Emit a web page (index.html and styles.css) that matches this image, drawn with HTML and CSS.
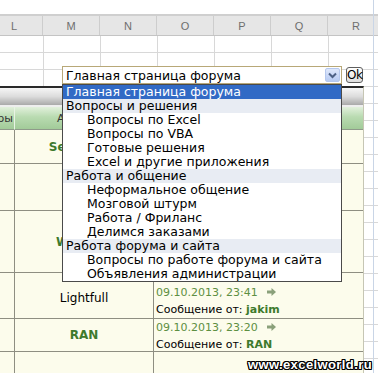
FILE: index.html
```html
<!DOCTYPE html>
<html lang="ru">
<head>
    <meta charset="UTF-8">
    <title>Форум - переход по разделам</title>
    <link rel="stylesheet" href="styles.css">
</head>
<body>
    <div class="screen">
        <div class="topbar"></div>
        <div class="sheet">
            <div class="sheet-head">
                <div>L</div><div>M</div><div>N</div><div>O</div><div>P</div><div>Q</div><div>R</div>
            </div>
            <div class="sheet-body"></div>
        </div>

        <div class="forum">
            <div class="forum-bar"></div>
            <div class="forum-table">
                <div class="cell head first"><span>ры</span></div>
                <div class="cell head author">Автор</div>
                <div class="cell head"></div>

                <div class="cell row1 first"></div>
                <div class="cell row1 author"><b class="nick">Serge_007</b></div>
                <div class="cell row1"></div>

                <div class="cell row2 first"></div>
                <div class="cell row2 author"></div>
                <div class="cell row2"></div>

                <div class="cell row3 first"></div>
                <div class="cell row3 author"><b class="nick">Wasilich</b></div>
                <div class="cell row3"></div>

                <div class="cell row4 first"></div>
                <div class="cell row4 author"><span class="plain">Lightfull</span></div>
                <div class="cell row4 last">
                    <div class="date">09.10.2013, 23:41 <svg class="go" width="9" height="8" viewBox="0 0 9 8"><path d="M0 2.5h4.5V0L9 4 4.5 8V5.5H0z" fill="#8aa07a"/></svg></div>
                    <div class="msg">Сообщение от: <b class="nick">jakim</b></div>
                </div>

                <div class="cell row5 first"></div>
                <div class="cell row5 author"><b class="nick">RAN</b></div>
                <div class="cell row5 last">
                    <div class="date">09.10.2013, 23:20 <svg class="go" width="9" height="8" viewBox="0 0 9 8"><path d="M0 2.5h4.5V0L9 4 4.5 8V5.5H0z" fill="#8aa07a"/></svg></div>
                    <div class="msg">Сообщение от: <b class="nick">RAN</b></div>
                </div>

                <div class="cell row6 first"></div>
                <div class="cell row6 author"></div>
                <div class="cell row6"></div>
            </div>
        </div>

        <div class="jump">
            <div class="select">
                <span class="select-text">Главная страница форума</span>
                <span class="select-btn">
                    <svg width="9" height="7" viewBox="0 0 9 7"><path d="M1 1.5l3.5 3.5L8 1.5" fill="none" stroke="#4d6185" stroke-width="2"/></svg>
                </span>
            </div>
            <div class="ok">Ok</div>
        </div>

        <ul class="menu">
            <li class="group selected">Главная страница форума</li>
            <li class="group">Вопросы и решения</li>
            <li>Вопросы по Excel</li>
            <li>Вопросы по VBA</li>
            <li>Готовые решения</li>
            <li>Excel и другие приложения</li>
            <li class="group">Работа и общение</li>
            <li>Неформальное общение</li>
            <li>Мозговой штурм</li>
            <li>Работа / Фриланс</li>
            <li>Делимся заказами</li>
            <li class="group">Работа форума и сайта</li>
            <li>Вопросы по работе форума и сайта</li>
            <li>Объявления администрации</li>
        </ul>

        <div class="edge"></div>
        <div class="watermark">www.excelworld.ru</div>
    </div>
</body>
</html>
```

FILE: styles.css
```css
* {
    margin: 0;
    padding: 0;
    box-sizing: border-box;
}

body {
    font-family: "DejaVu Sans", Verdana, sans-serif;
    color: #000;
    background: #fff;
}

.screen {
    position: relative;
    width: 378px;
    height: 373px;
    overflow: hidden;
}

/* spreadsheet behind the forum */
.topbar {
    height: 16px;
    border-bottom: 2px solid #cfcfcf;
}

.sheet-head {
    display: grid;
    grid-template-columns: repeat(7, 57px);
    margin-left: -14px;
    height: 20px;
    background: #e6e6e6;
    border-bottom: 1px solid #c4c4c4;
}

.sheet-head div {
    display: flex;
    align-items: center;
    justify-content: center;
    border-right: 1px solid #cdcdcd;
    font-family: "Liberation Sans", Arial, sans-serif;
    font-size: 11px;
    color: #6e6e6e;
}

.sheet-body {
    height: 340px;
    background-color: #fff;
    background-image:
        linear-gradient(to right, #d8d8d8 1px, transparent 1px),
        linear-gradient(to bottom, #d8d8d8 1px, transparent 1px);
    background-size: 57px 100%, 100% 17px;
    background-position: 43px 0, 0 16px;
}

/* forum block embedded on the sheet */
.forum {
    position: absolute;
    left: 0;
    top: 86px;
    width: 364px;
    bottom: 0;
    border-top: 2px solid #2a2a2a;
    background: #fcfcec;
    border-right: 1px solid #c6c6b4;
}

.forum-bar {
    height: 19px;
    background: linear-gradient(#f6f6f6, #dcdcdc 50%, #a9a9a9);
    border-bottom: 2px solid #eeeeee;
}

.forum-table {
    display: grid;
    grid-template-columns: 15px 139px 1fr;
    grid-template-rows: 23px 34px 47px 62px 46px 33px 40px;
}

.cell {
    display: flex;
    align-items: center;
    justify-content: center;
    border-bottom: 1px solid #8e8e82;
    border-right: 1px solid #8e8e82;
    overflow: hidden;
}

.cell.last {
    border-right: none;
    flex-direction: column;
    align-items: flex-start;
    justify-content: center;
    padding-left: 2px;
    padding-top: 1px;
}

.cell.row4 {
    padding-top: 4px;
}

.cell.row4.last {
    padding-top: 10px;
}

.forum-table > .cell:nth-child(3n) {
    border-right: none;
}

.cell.head {
    background: linear-gradient(#e2f0dc, #b9dbb1 45%, #a2cb99);
    border-right-color: #e8f3e4;
    border-bottom-color: #8f9a8a;
    font-size: 11px;
    color: #333;
}

.cell.first {
    justify-content: flex-end;
}

.cell.head.first span {
    padding-right: 1px;
}

.cell.head.author {
    justify-content: flex-start;
    padding-left: 42px;
}

.nick {
    color: #3e7a2c;
    font-size: 11px;
    font-weight: bold;
}

.author .nick {
    font-size: 12px;
}

.plain {
    font-size: 12px;
}

.date {
    font-size: 11px;
    line-height: 17px;
    color: #5d8f42;
    display: flex;
    align-items: center;
}

.go {
    margin-left: 9px;
}

.msg {
    font-size: 11px;
    line-height: 17px;
}

/* jump-to-forum select */
.jump {
    position: absolute;
    left: 62px;
    top: 66px;
    display: flex;
    gap: 4px;
}

.select {
    width: 280px;
    height: 18px;
    border: 1px solid #b8a878;
    background: #fff;
    display: flex;
    align-items: center;
    justify-content: space-between;
    padding: 0 1px 0 3px;
    font-size: 12.5px;
}

.select-btn {
    width: 15px;
    height: 14px;
    border: 1px solid #b5c8ee;
    border-radius: 2px;
    background: linear-gradient(#dfe8fb, #b7cbf3);
    display: flex;
    align-items: center;
    justify-content: center;
}

.ok {
    width: 17px;
    height: 16px;
    margin-top: 1px;
    border: 1px solid #5e5e5e;
    border-radius: 3px;
    background: linear-gradient(#ffffff, #dedede);
    font-size: 12px;
    line-height: 14px;
    text-align: center;
    letter-spacing: -0.5px;
}

/* opened drop-down list */
.menu {
    position: absolute;
    left: 62px;
    top: 84px;
    width: 280px;
    list-style: none;
    background: #fff;
    border: 1px solid #4a4a4a;
    font-size: 12.5px;
    line-height: 14px;
    white-space: nowrap;
}

.menu li {
    padding-left: 24px;
}

.menu li.group {
    padding-left: 3px;
    background: #e8ecf3;
}

.menu li.selected {
    background: #316ac5;
    color: #fff;
}

.edge {
    position: absolute;
    left: 373px;
    top: 0;
    bottom: 0;
    width: 1px;
    background: #c9d5e6;
}

.watermark {
    position: absolute;
    right: 6px;
    bottom: 1px;
    font-family: "Liberation Sans", Arial, sans-serif;
    font-weight: bold;
    font-size: 13px;
    letter-spacing: 0.4px;
    color: #fff;
    text-shadow: -1px -1px 0 #000, 1px -1px 0 #000, -1px 1px 0 #000, 1px 1px 0 #000, 0 1px 0 #000, 0 -1px 0 #000, 1px 0 0 #000, -1px 0 0 #000;
}
```
